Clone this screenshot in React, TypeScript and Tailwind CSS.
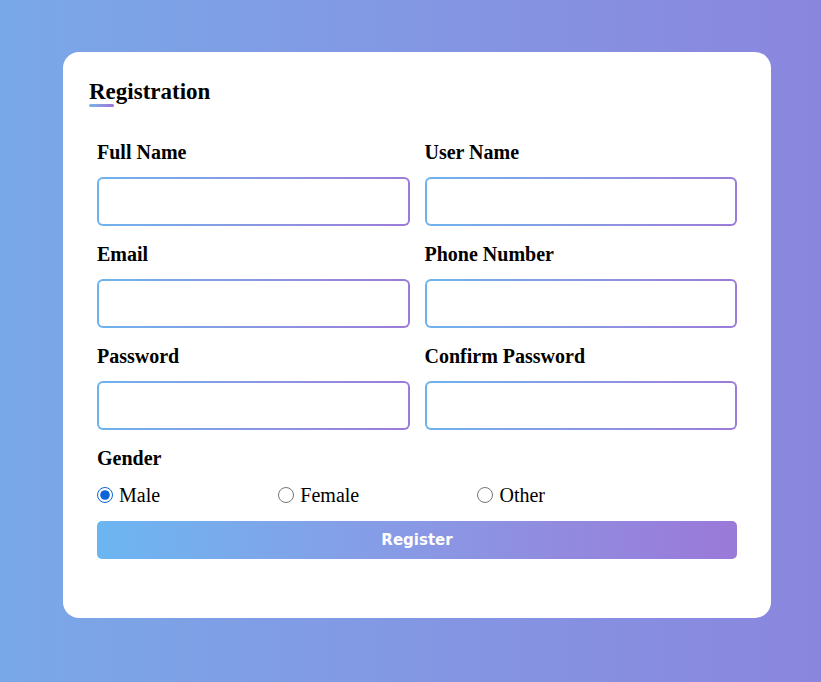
import { useState } from 'react'

const FIELDS = [
  { label: 'Full Name', type: 'text' },
  { label: 'User Name', type: 'text' },
  { label: 'Email', type: 'email' },
  { label: 'Phone Number', type: 'tel' },
  { label: 'Password', type: 'password' },
  { label: 'Confirm Password', type: 'password' },
]

const GENDERS = ['Male', 'Female', 'Other']

function Field({ label, type }: { label: string; type: string }) {
  return (
    <div className="mb-[16px]">
      <label className="block text-[20px] leading-[24px] font-bold text-black mb-[13px]">{label}</label>
      <div className="rounded-[6px] p-[2px] bg-gradient-to-r from-[#6cb3ee] to-[#9b7bd9]">
        <input type={type} className="block w-full h-[45px] rounded-[4px] bg-white outline-none px-3" />
      </div>
    </div>
  )
}

export default function App() {
  const [gender, setGender] = useState('Male')

  return (
    <div
      className="min-h-[682px] w-full bg-gradient-to-r from-[#79a8e8] to-[#8a86de] pt-[52px] pb-[64px] px-[63px]"
      style={{ fontFamily: '"Liberation Serif", "Times New Roman", serif' }}
    >
      <div className="w-[708px] h-[566px] bg-white rounded-[16px] pt-[26px] px-[26px]">
        <div className="text-[23px] leading-[28px] font-bold text-black">Registration</div>
        <div className="h-[3px] w-[25px] -mt-[2px] bg-gradient-to-r from-[#71b7e6] to-[#9b6fd6] rounded-sm" />

        <form className="mx-[8px] mt-[33px]" onSubmit={(e) => e.preventDefault()}>
          <div className="grid grid-cols-2 gap-x-[15px]">
            {FIELDS.map((f) => (
              <Field key={f.label} label={f.label} type={f.type} />
            ))}
          </div>

          <div className="text-[20px] leading-[24px] font-bold text-black">Gender</div>
          <div className="w-[70%] flex justify-between items-center mt-[13px] h-[24px]">
            {GENDERS.map((g) => (
              <label key={g} className="flex items-center text-[20px] leading-[24px] text-black cursor-pointer">
                <input
                  type="radio"
                  name="gender"
                  checked={gender === g}
                  onChange={() => setGender(g)}
                  className="w-[16px] h-[16px] m-0 mr-[6px] accent-[#0b64d8]"
                />
                {g}
              </label>
            ))}
          </div>

          <button
            type="submit"
            className="mt-[14px] w-full h-[38px] rounded-[5px] bg-gradient-to-r from-[#6bb6f1] to-[#9a79d9] text-white text-[15px] font-bold"
            style={{ fontFamily: '"DejaVu Sans", Verdana, sans-serif' }}
          >
            Register
          </button>
        </form>
      </div>
    </div>
  )
}
